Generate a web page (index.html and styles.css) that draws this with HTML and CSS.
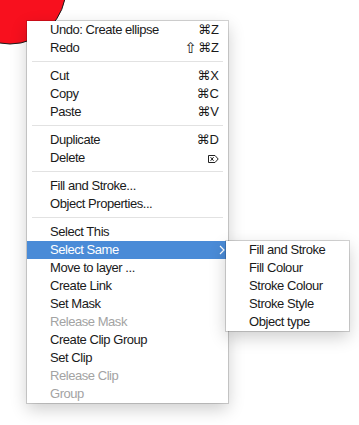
FILE: index.html
```html
<!DOCTYPE html>
<html>
<head>
<meta charset="utf-8">
<link rel="stylesheet" href="styles.css">
</head>
<body>
<div class="canvas">
  <svg class="ellipse" width="90" height="60" viewBox="0 0 90 60">
    <circle cx="10" cy="-12" r="56" fill="#f8101e" stroke="#1a1a1a" stroke-width="1"/>
  </svg>
</div>

<div class="menu main">
  <div class="item"><span class="label">Undo: Create ellipse</span><span class="key">⌘Z</span></div>
  <div class="item"><span class="label">Redo</span><span class="key"><span class="shift">⇧</span>⌘Z</span></div>
  <div class="sep"></div>
  <div class="item"><span class="label">Cut</span><span class="key">⌘X</span></div>
  <div class="item"><span class="label">Copy</span><span class="key">⌘C</span></div>
  <div class="item"><span class="label">Paste</span><span class="key">⌘V</span></div>
  <div class="sep"></div>
  <div class="item"><span class="label">Duplicate</span><span class="key">⌘D</span></div>
  <div class="item"><span class="label">Delete</span><span class="key">
    <svg class="del" width="11" height="8" viewBox="0 0 11 8"><path d="M0.5 0.5 H7 L10.2 4 L7 7.5 H0.5 Z" fill="none" stroke="#222" stroke-width="1"/><path d="M2.6 2.2 L5.6 5.8 M5.6 2.2 L2.6 5.8" stroke="#222" stroke-width="1"/></svg>
  </span></div>
  <div class="sep"></div>
  <div class="item"><span class="label">Fill and Stroke...</span></div>
  <div class="item"><span class="label">Object Properties...</span></div>
  <div class="sep"></div>
  <div class="item"><span class="label">Select This</span></div>
  <div class="item active"><span class="label">Select Same</span><span class="key">
    <svg class="chev" width="6" height="10" viewBox="0 0 6 10"><path d="M1 1 L5 5 L1 9" fill="none" stroke="#fff" stroke-width="1.2"/></svg>
  </span></div>
  <div class="item"><span class="label">Move to layer ...</span></div>
  <div class="item"><span class="label">Create Link</span></div>
  <div class="item"><span class="label">Set Mask</span></div>
  <div class="item disabled"><span class="label">Release Mask</span></div>
  <div class="item"><span class="label">Create Clip Group</span></div>
  <div class="item"><span class="label">Set Clip</span></div>
  <div class="item disabled"><span class="label">Release Clip</span></div>
  <div class="item disabled"><span class="label">Group</span></div>
</div>

<div class="menu sub">
  <div class="item"><span class="label">Fill and Stroke</span></div>
  <div class="item"><span class="label">Fill Colour</span></div>
  <div class="item"><span class="label">Stroke Colour</span></div>
  <div class="item"><span class="label">Stroke Style</span></div>
  <div class="item"><span class="label">Object type</span></div>
</div>
</body>
</html>
```

FILE: styles.css
```css
html, body {
  margin: 0;
  padding: 0;
  background: #ffffff;
}

body {
  width: 359px;
  height: 425px;
  position: relative;
  overflow: hidden;
  font-family: "Liberation Sans", "DejaVu Sans", sans-serif;
  font-size: 13px;
  letter-spacing: -0.45px;
  color: #1a1a1a;
}

.canvas {
  position: absolute;
  left: 0;
  top: 0;
  width: 359px;
  height: 425px;
}

.ellipse {
  display: block;
}

.menu {
  position: absolute;
  background: #ffffff;
  display: flex;
  flex-direction: column;
  box-shadow: 0 0 0 1px rgba(0, 0, 0, 0.16), 0 6px 16px rgba(0, 0, 0, 0.2);
}

.main {
  left: 27px;
  top: 21px;
  width: 201px;
}

.sub {
  left: 226px;
  top: 241px;
  width: 123px;
}

.item {
  height: 18px;
  line-height: 18px;
  display: flex;
  align-items: center;
  justify-content: space-between;
  padding: 0 9px 0 23px;
  white-space: nowrap;
}

.item.active {
  background: #4a8bd7;
  color: #ffffff;
  padding-right: 3px;
}

.item.disabled {
  color: #a3a3a3;
}

.key {
  display: flex;
  align-items: center;
  letter-spacing: 0;
  font-size: 13px;
}

.shift {
  font-size: 15px;
  margin-right: 1px;
}

.del {
  display: block;
  margin-top: 1px;
}

.chev {
  display: block;
}

.sep {
  height: 10px;
  display: flex;
  flex-direction: column;
  padding: 0 5px;
  box-sizing: border-box;
}

.sep::before {
  content: "";
  display: block;
  margin-top: 4px;
  height: 1px;
  background: #e2e2e2;
}
```
